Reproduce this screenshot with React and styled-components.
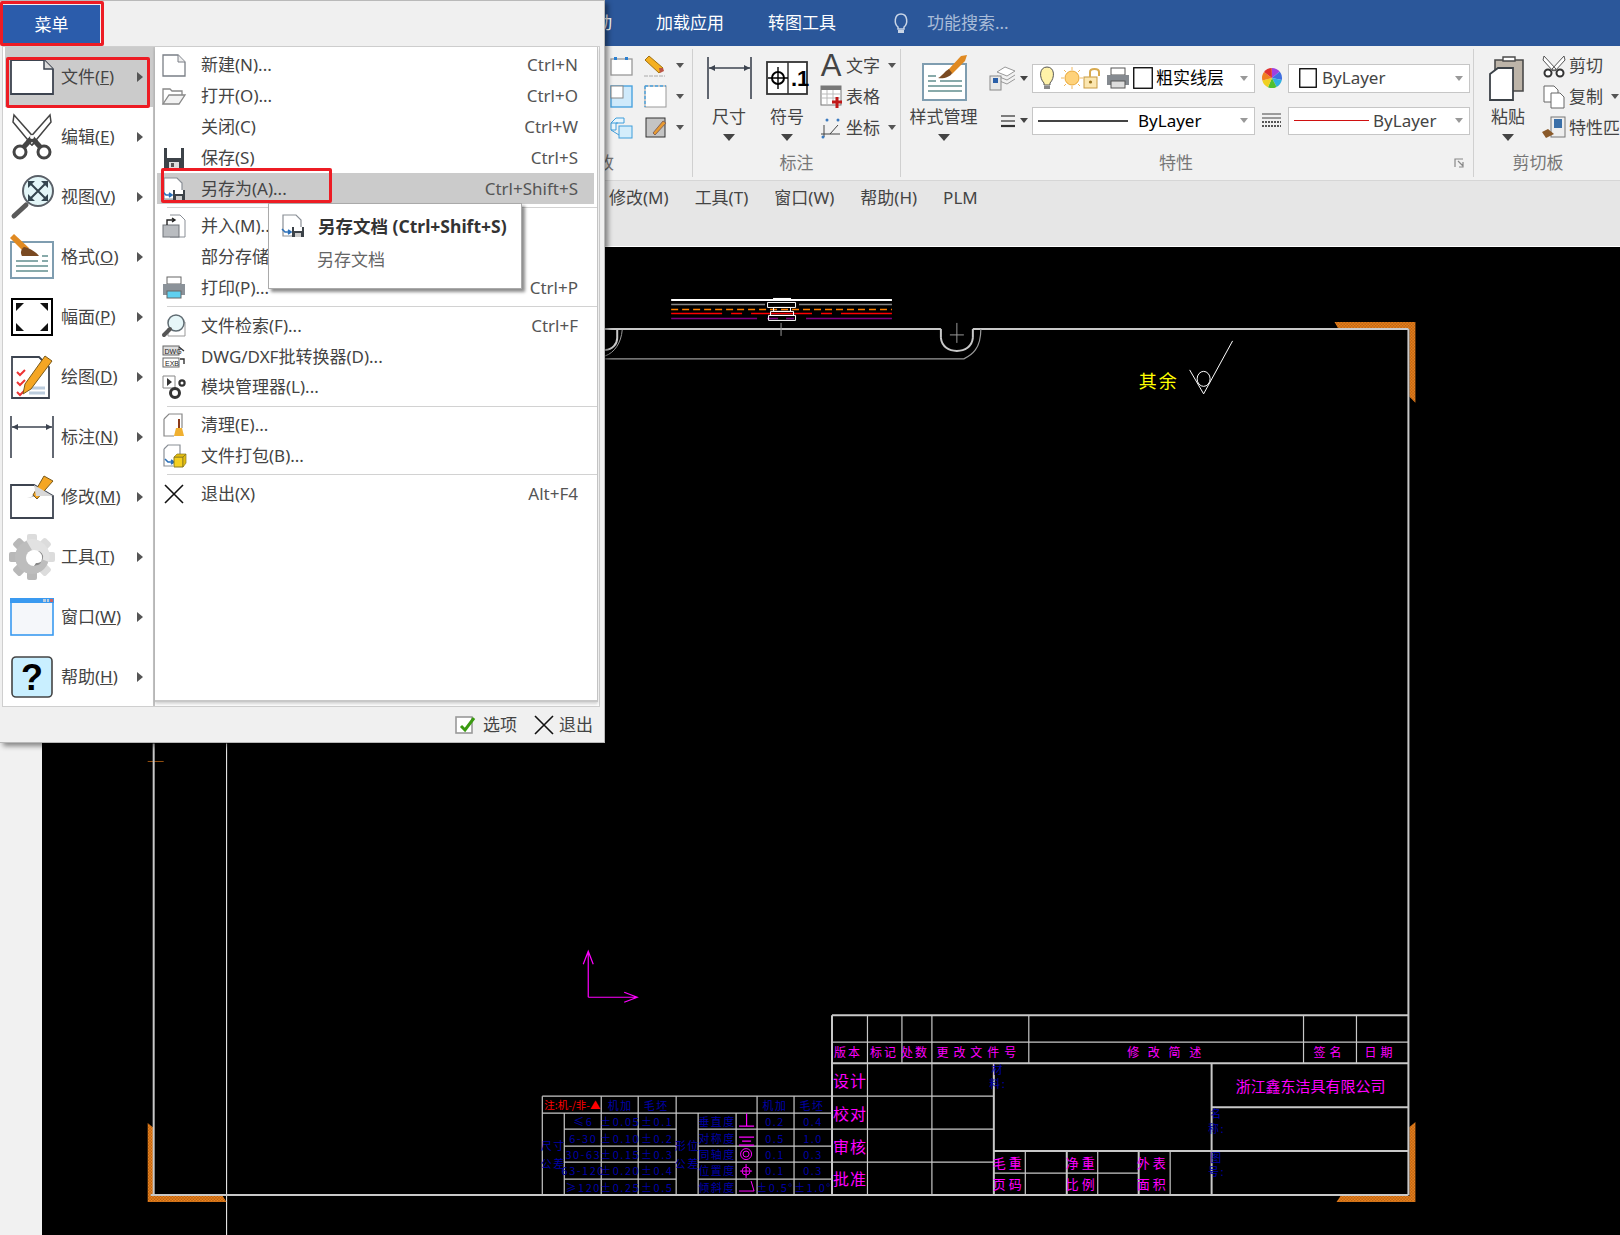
import React from 'react';
import styled, { createGlobalStyle } from 'styled-components';

const Global = createGlobalStyle`
  html, body { margin: 0; padding: 0; background: #000; }
  body { font-family: "Noto Sans", "Noto Sans CJK SC", sans-serif; }
  #root { width: 1620px; height: 1235px; }
`;

const Page = styled.div`
  position: relative; width: 1620px; height: 1235px; overflow: hidden;
  display: flex; flex-direction: column; color: #444; font-size: 17px; line-height: 22px;
`;
const TabBar = styled.div`
  height: 46px; flex: none; background: #2b579a; display: flex; align-items: center;
  padding-left: 595px; box-sizing: border-box; color: #fff; gap: 44px;
`;
const Tab = styled.span`white-space: nowrap;`;
const SearchBox = styled.div`
  display: flex; align-items: center; gap: 18px; margin-left: 13px; color: #a9bcd8;
`;
const Ribbon = styled.div`
  height: 135px; flex: none; box-sizing: border-box; background: #f1f1f1; border-bottom: 1px solid #d6d6d6;
  padding: 3px 0 3px 605px; display: flex; overflow: hidden;
`;
const Group = styled.div`
  width: ${p => p.$w}px; flex: none; box-sizing: border-box; display: flex; flex-direction: column;
  border-right: ${p => (p.$last ? 'none' : '1px solid #d0d0d0')};
`;
const GroupBody = styled.div`flex: 1; display: flex; min-height: 0;`;
const GroupLabel = styled.div`
  height: 27px; line-height: 26px; color: #777; text-align: center; white-space: nowrap;
  padding-right: ${p => p.$pr || 0}px; position: relative;
`;
const EdgeLabel = styled(GroupLabel)`text-align: left; margin-left: -8px;`;
const BigTool = styled.div`
  width: ${p => p.$w}px; flex: none; display: flex; flex-direction: column; align-items: center;
`;
const BigIcon = styled.div`height: 52px; margin-top: 3px; display: flex; align-items: center; justify-content: center;`;
const BigLabel = styled.div`margin-top: 2px; white-space: nowrap; text-align: center;`;
const BigCaret = styled.i`
  display: block; margin-top: 6px; width: 0; height: 0;
  border-left: 6px solid transparent; border-right: 6px solid transparent; border-top: 7px solid #444;
`;
const Caret = styled.i`
  display: block; flex: none; width: 0; height: 0; margin-left: ${p => p.$ml || 0}px;
  border-left: 4px solid transparent; border-right: 4px solid transparent; border-top: 5px solid ${p => p.$c || '#555'};
`;
const EditGrid = styled.div`
  display: grid; grid-template-columns: 34px 32px 10px; grid-auto-rows: 31px; padding: 1px 0 0 5px; align-items: center;
`;
const SmallCol = styled.div`margin-left: ${p => p.$ml || 0}px; display: flex; flex-direction: column; padding-top: 1px;`;
const SmallTool = styled.div`height: 31px; display: flex; align-items: center; white-space: nowrap;`;
const SmallSlot = styled.div`width: 24px; flex: none; display: flex; justify-content: center; margin-right: 3px;`;
const PropArea = styled.div`display: flex; flex-direction: column; gap: 14px; padding-top: 15px;`;
const PropRow = styled.div`display: flex; align-items: center; height: 28.5px;`;
const PropLead = styled.div`width: 46px; flex: none; display: flex; align-items: center; justify-content: flex-end; gap: 5px; padding-right: 4px; box-sizing: border-box;`;
const PropMid = styled.div`width: 33px; flex: none; display: flex; justify-content: center;`;
const Combo = styled.div`
  width: ${p => p.$w}px; height: 100%; box-sizing: border-box; background: #fff; border: 1px solid #c6c6c6;
  display: flex; align-items: center; padding: 0 6px 0 ${p => p.$pl || 5}px; white-space: nowrap; color: ${p => p.$c || '#444'};
  flex: none;
`;
const ComboEnd = styled.div`margin-left: auto;`;
const Launcher = styled.svg`position: absolute; right: 8px; top: 8px;`;
const MenuBarRow = styled.div`
  height: 65px; flex: none; box-sizing: border-box; background: #e6e6e6; display: flex; gap: 26px; padding: 6px 0 0 609px;
`;
const MenuWord = styled.span`white-space: nowrap;`;
const Canvas = styled.div`flex: 1; min-height: 0; display: flex; background: #000; `;
const Gutter = styled.div`width: 42px; flex: none; background: #f1f1f1;`;
const Sheet = styled.svg`display: block; flex: none; border-top: 1px solid #fff; box-sizing: border-box;`;

const MenuPanel = styled.div`
  position: absolute; left: 0; top: 0; width: 605px; height: 743px; box-sizing: border-box;
  background: #f0f0f0; border: 1px solid #b9b9b9; border-left: 0; box-shadow: 3px 3px 5px rgba(0,0,0,.45);
  display: flex; flex-direction: column;
`;
const MenuHead = styled.div`height: 45px; flex: none; display: flex; padding: 4px 0 0 3px; box-sizing: border-box;`;
const MenuButton = styled.div`
  width: 97px; height: 39px; background: #2b5cab; color: #fff; display: flex; align-items: center; justify-content: center;
`;
const MenuBody = styled.div`
  height: 661px; flex: none; margin: 0 4px 0 2px; background: #fff; border: 1px solid #cfcfcf; display: flex; box-sizing: border-box;
`;
const LeftList = styled.div`width: 148px; flex: none; border-right: 2px solid #c4c4c4; box-sizing: content-box; padding-left: 2px;`;
const LeftRow = styled.div`
  height: 60px; display: flex; align-items: center; background: ${p => (p.$on ? '#cbcbcb' : 'transparent')};
`;
const LeftIcon = styled.div`width: 44px; flex: none; margin-left: 5px; display: flex; justify-content: center;`;
const LeftLabel = styled.div`margin-left: 7px; white-space: nowrap; flex: 1;`;
const RightTri = styled.i`
  display: block; flex: none; margin-right: 10px; width: 0; height: 0;
  border-top: 5px solid transparent; border-bottom: 5px solid transparent; border-left: 6px solid #555;
`;
const RightPane = styled.div`
  width: 443px; height: 655px; flex: none; box-sizing: border-box; background: #fff; border-right: 1px solid #c4c4c4; border-bottom: 2px solid #c8c8c8;
  padding-top: 3px; box-shadow: 0 2px 3px rgba(0,0,0,.18); display: flex; flex-direction: column;
`;
const FileRow = styled.div`
  height: 30.8px; flex: none; display: flex; align-items: center; margin: 0 3px 0 2px; background: ${p => (p.$on ? '#cbcbcb' : 'transparent')};
`;
const FileIcon = styled.div`width: 24px; height: 24px; flex: none; margin-left: 5px; display: flex; align-items: center; justify-content: center;`;
const FileLabel = styled.div`margin-left: 15px; white-space: nowrap;`;
const Shortcut = styled.div`margin-left: auto; padding-right: 16px; white-space: nowrap; color: #555;`;
const Sep = styled.div`height: 1px; flex: none; margin: 3px 0 3px 12px; background: #d2d2d2;`;
const MenuFoot = styled.div`
  flex: 1; display: flex; align-items: center; justify-content: flex-end; gap: 16px; padding-right: 11px;
`;
const FootBtn = styled.div`display: flex; align-items: center; gap: 4px;`;
const Flyout = styled.div`
  position: absolute; left: 268px; top: 203px; width: 254px; height: 86px; box-sizing: border-box; background: #fff;
  border: 1px solid #aaa; box-shadow: 3px 3px 3px rgba(0,0,0,.45); padding: 10px 0 0 12px;
`;
const FlyTitle = styled.div`display: flex; align-items: center; gap: 13px; font-weight: 700; font-size: 17.5px; color: #333; white-space: nowrap;`;
const FlyText = styled.div`margin: 11px 0 0 36px; color: #666;`;
const RedMark = styled.div`
  position: absolute; left: ${p => p.$x}px; top: ${p => p.$y}px; width: ${p => p.$w}px; height: ${p => p.$h}px;
  box-sizing: border-box; border: 3px solid #ed1c24; border-radius: 2px; pointer-events: none;
`;
const Ic = styled.svg`display: block; flex: none; overflow: visible;`;

const D = '#3d4450';
const I = ({ w, h, children }) => <Ic width={w} height={h} viewBox={`0 0 ${w} ${h}`}>{children}</Ic>;

/* ---- large menu icons ---- */
const BigDoc = () => <I w={44} h={36}><path d="M1 1H34L43 10V35H1Z" fill="#fff" stroke={D} strokeWidth="1.8"/><path d="M34 1V10H43" fill="#ddd" stroke={D} strokeWidth="1.5"/></I>;
const BigScissors = () => <I w={42} h={46}>
  <path d="M3 1L26 27L21 31L2 8Z" fill="#fff" stroke="#444" strokeWidth="1.5"/>
  <path d="M39 1L16 27L21 31L40 8Z" fill="#fff" stroke="#444" strokeWidth="1.5"/>
  <path d="M21 24L10 36M21 24L32 36" stroke="#444" strokeWidth="5"/>
  <circle cx="9" cy="38" r="6" fill="#fff" stroke="#444" strokeWidth="3"/><circle cx="33" cy="38" r="6" fill="#fff" stroke="#444" strokeWidth="3"/>
  <circle cx="21" cy="23" r="2" fill="#fff"/>
</I>;
const BigZoom = () => <I w={44} h={44}>
  <path d="M16 30L4 41" stroke="#5a5a5a" strokeWidth="5" strokeLinecap="round"/>
  <circle cx="28" cy="16" r="15" fill="#e3f6f8" stroke="#5a6068" strokeWidth="2"/>
  <path d="M21 9L35 23M35 9L21 23" stroke="#33454f" strokeWidth="2"/>
  <path d="M18 6h7l-7 7zM38 6h-7l7 7zM18 26h7l-7-7zM38 26h-7l7-7z" fill="#33454f"/>
</I>;
const BigFormat = () => <I w={44} h={46}>
  <rect x="1" y="8" width="42" height="36" fill="#fff" stroke="#7f9db0" strokeWidth="2"/>
  <path d="M6 27h22M6 32h32M6 37h32M32 22h6M32 27h6" stroke="#8aa" strokeWidth="2"/>
  <path d="M0 4L4 0L19 14L14 18Z" fill="#e08a22"/><path d="M14 13C20 14 26 18 29 22H12C10 19 11 15 14 13Z" fill="#7a4a22"/>
</I>;
const BigFrame = () => <I w={42} h={38}>
  <rect x="1" y="1" width="40" height="36" fill="#fff" stroke="#000" strokeWidth="2"/>
  <path d="M5 5h8l-8 8zM37 5h-8l8 8zM5 33h8l-8-8zM37 33h-8l8-8z" fill="#111"/>
</I>;
const BigDraw = () => <I w={42} h={44}>
  <path d="M1 2H28L38 12V43H1Z" fill="#fff" stroke={D} strokeWidth="1.8"/>
  <path d="M6 17l3 3 5-5M6 27l3 3 5-5M6 37l3 3 5-5" fill="none" stroke="#e33" strokeWidth="2"/>
  <path d="M18 33h16M18 38h16" stroke="#bcd" strokeWidth="3"/>
  <path d="M34 1L41 6L20 34L12 39L14 29Z" fill="#f5a623" stroke="#7a5a1a"/>
</I>;
const BigDim = () => <I w={44} h={42}>
  <path d="M1 0V42M43 0V42" stroke={D} strokeWidth="1.6"/><path d="M2 11H42" stroke={D} strokeWidth="1.4"/>
  <path d="M2 11l6-3v6zM42 11l-6-3v6z" fill={D}/>
</I>;
const BigModify = () => <I w={44} h={44}>
  <path d="M1 10H24L43 21V43H1Z" fill="#fff" stroke={D} strokeWidth="1.8"/>
  <path d="M34 1L43 6L27 24L23 20Z" fill="#f5a623" stroke="#7a5a1a"/><path d="M23 20l-1 2 -5 1 8-2" fill="#555"/>
  <path d="M24 10L43 21H26Z" fill="#d8d8d8"/>
</I>;
const BigGear = () => <I w={42} h={46}>
  <g transform="translate(21 23)">
    {[0,45,90,135,180,225,270,315].map(a => <rect key={a} x="-5" y="-23" width="10" height="10" rx="2" transform={`rotate(${a})`} fill={a<150?'#dcdcdc':'#b8b8b8'}/>)}
    <circle r="17" fill="#bdbdbd"/><path d="M-6 -17A18 18 0 0 1 17 5L4 0Z" fill="#e2e2e2"/>
    <circle cx="2" cy="1" r="8" fill="#fff"/><path d="M6 -6A8 8 0 0 1 2 9L4 6A6 6 0 0 0 6 -6Z" fill="#888"/>
  </g>
</I>;
const BigWindow = () => <I w={44} h={38}>
  <rect x="1" y="1" width="42" height="36" fill="#f5f7fa" stroke="#3a9af0" strokeWidth="1.6"/><rect x="0" y="0" width="44" height="5" fill="#3a9af0"/>
  <rect x="33" y="1" width="3" height="3" fill="#bcd"/><rect x="37" y="1" width="2" height="3" fill="#bcd"/><rect x="40" y="1" width="3" height="3" fill="#c66"/>
</I>;
const QMark = styled.text`font-family: "Liberation Sans", sans-serif; font-weight: 700; font-size: 36px;`;
const BigHelp = () => <I w={42} h={42}><rect x="1" y="1" width="40" height="40" rx="4" fill="#c9efff" stroke="#444" strokeWidth="1.6"/><QMark x="21" y="34" textAnchor="middle" fill="#000">?</QMark></I>;

/* ---- small icons ---- */
const S = 24;
const SmDoc = () => <I w={S} h={S}><path d="M1 2H16L23 9V23H1Z" fill="#fff" stroke="#7a7f86" strokeWidth="1.3"/><path d="M16 2V9H23" fill="#eee" stroke="#7a7f86"/></I>;
const SmFolder = () => <I w={S} h={S}><path d="M1 20V5H8L10 7H20V11" fill="#fff" stroke="#888" strokeWidth="1.3"/><path d="M1 20L7 11H23L17 20Z" fill="#f2f2f2" stroke="#888" strokeWidth="1.3"/></I>;
const SmSave = () => <I w={S} h={S}><path d="M2 2H22V22H2Z" fill="#3c4248"/><rect x="5" y="2" width="14" height="10" fill="#fff"/><rect x="7" y="16" width="10" height="6" fill="#ddd"/><rect x="9" y="17" width="3" height="4" fill="#555"/></I>;
const SmSaveAs = () => <I w={S} h={S}><path d="M2 1H15L20 6V22H2Z" fill="#fff" stroke="#8a8f96" strokeWidth="1.2"/><path d="M1 15l3 3h5M7 16l3 2-3 2" fill="none" stroke="#2a6fb8" strokeWidth="1.6"/><rect x="11" y="13" width="12" height="10" fill="#3c4248"/><rect x="13" y="13" width="8" height="4" fill="#fff"/><rect x="14" y="19" width="6" height="4" fill="#ccc"/></I>;
const SmMerge = () => <I w={S} h={S}><path d="M8 1H18L23 6V23H8" fill="#fff" stroke="#8a8f96"/><rect x="1" y="11" width="16" height="12" fill="#b9bcc0" stroke="#70757a"/><path d="M5 11V6H12M10 4l3 2-3 2" fill="none" stroke="#222" strokeWidth="1.4"/></I>;
const SmPrint = () => <I w={S} h={S}><rect x="5" y="1" width="14" height="7" fill="#fff" stroke="#666"/><path d="M1 8H23V19H1Z" fill="#8b9299"/><rect x="5" y="15" width="14" height="7" fill="#5fd0f0" stroke="#666"/></I>;
const SmSearch = () => <I w={S} h={S}><path d="M6 14V22H23V8H20" fill="#fff" stroke="#999"/><circle cx="14" cy="9" r="8" fill="#e6f6f8" stroke="#5f6b72" strokeWidth="1.5"/><path d="M8 15L2 21" stroke="#555" strokeWidth="4" strokeLinecap="round"/></I>;
const TinyT = styled.text`font-family: "Liberation Sans", sans-serif; font-size: 7px;`;
const SmConvert = () => <I w={S} h={S}><rect x="1" y="1" width="16" height="9" fill="#ddd" stroke="#666"/><TinyT x="2.5" y="8.5" fill="#222">DWG</TinyT><rect x="1" y="13" width="16" height="9" fill="#fff" stroke="#666"/><TinyT x="3" y="20.5" fill="#222">EXB</TinyT><path d="M17 2l5 4M22 19v-5h-4" fill="none" stroke="#333" strokeWidth="1.4"/></I>;
const SmModule = () => <I w={S} h={S}><path d="M1 1H13V13H1Z" fill="#fff" stroke="#888"/><path d="M5 3l5 4-5 4z" fill="#333"/><circle cx="13" cy="18" r="4.5" fill="none" stroke="#333" strokeWidth="3"/><circle cx="20" cy="8" r="2.6" fill="none" stroke="#333" strokeWidth="2.2"/></I>;
const SmClean = () => <I w={S} h={S}><path d="M2 6L7 1H20V15M12 23H2V6" fill="#fff" stroke="#888" strokeWidth="1.2"/><path d="M17 6V15" stroke="#8a3a1a" strokeWidth="2"/><path d="M14 15H20L22 23H12Z" fill="#f0b030"/></I>;
const SmPack = () => <I w={S} h={S}><path d="M2 5L6 1H18V11M11 22H2V5" fill="#fff" stroke="#8a8f96" strokeWidth="1.2"/><path d="M3 15l3 3h5M9 16l3 2-3 2" fill="none" stroke="#2a6fb8" strokeWidth="1.6"/><path d="M12 13h9v10h-9z" fill="#f5d020" stroke="#8a7a20"/><path d="M12 13l3-3h9l-3 3zM21 13l3-3v9l-3 4z" fill="#e2bc10" stroke="#8a7a20" strokeWidth=".7"/></I>;
const SmX = ({ c = '#111' }) => <I w={S - 2} h={S - 2}><path d="M2 2L20 20M20 2L2 20" stroke={c} strokeWidth="1.6"/></I>;
const SmCheck = () => <I w={S} h={S}><rect x="1" y="4" width="16" height="16" fill="#fff" stroke="#999" strokeWidth="1.6"/><path d="M6 13l4 4 9-12" fill="none" stroke="#3a9a10" strokeWidth="3"/></I>;
const Bulb = ({ c = '#c9d5e6', s = 1 }) => <I w={16 * s} h={20 * s}><path d={`M${5*s} ${14*s}C${1*s} ${11*s} ${1*s} ${1*s} ${8*s} ${1*s}C${15*s} ${1*s} ${15*s} ${11*s} ${11*s} ${14*s}V${16*s}H${5*s}Z`} fill="none" stroke={c} strokeWidth="1.5"/><rect x={5*s} y={17*s} width={6*s} height={3*s} fill={c}/></I>;

/* ---- ribbon icons ---- */
const RDots = () => <I w={23} h={20}><rect x="1" y="3" width="21" height="16" fill="#fff" stroke="#999" strokeWidth="1.3"/><rect x="4" y="1" width="3" height="3" fill="#2a7fd0"/><rect x="15" y="1" width="3" height="3" fill="#2a7fd0"/></I>;
const RMarker = () => <I w={22} h={22}><path d="M1 5L5 1L19 13L15 18Z" fill="#f5b020" stroke="#a07010"/><path d="M15 13L19 13L20 16L16 18Z" fill="#b54"/><path d="M0 21H21" stroke="#aaa" strokeDasharray="4 1"/></I>;
const RBlue = () => <I w={23} h={23}><rect x="1" y="1" width="21" height="21" fill="#cfeafb" stroke="#4aa3df" strokeWidth="1.4"/><rect x="1" y="1" width="12" height="12" fill="#fff" stroke="#888"/></I>;
const RDash = () => <I w={23} h={23}><rect x="1" y="1" width="21" height="21" fill="#fff" stroke="#999"/><path d="M1 1H22" stroke="#4aa3df" strokeDasharray="3 2" strokeWidth="1.4"/><path d="M1 1V22" stroke="#4aa3df" strokeDasharray="3 2" strokeWidth="1.4"/></I>;
const RCubes = () => <I w={23} h={22}><path d="M1 6L6 1H14V6L6 6V13H1ZM1 6H8" fill="#e9f6fd" stroke="#3f9edb"/><rect x="9" y="9" width="13" height="12" fill="#d4edfb" stroke="#3f9edb"/><path d="M1 13L9 18" stroke="#3f9edb"/></I>;
const RHatch = () => <I w={23} h={23}><rect x="2" y="2" width="19" height="19" fill="#c4c4c4" stroke="#333"/><path d="M9 17L19 5L22 7L11 19Z" fill="#e89a30" stroke="#865"/></I>;
const RDim = () => <I w={45} h={42}><path d="M1 0V42M44 0V42" stroke={D} strokeWidth="1.6"/><path d="M2 11H43" stroke={D} strokeWidth="1.3"/><path d="M2 11l6-3v6zM43 11l-6-3v6z" fill={D}/></I>;
const SymT = styled.text`font-family: "Liberation Sans", sans-serif; font-weight: 700; font-size: 22px;`;
const RSym = () => <I w={42} h={34}><rect x="1" y="1" width="40" height="32" fill="#fff" stroke="#333" strokeWidth="1.8"/><path d="M22 1V33" stroke="#333" strokeWidth="1.5"/><circle cx="12" cy="17" r="6" fill="none" stroke="#000" strokeWidth="2"/><path d="M12 6V28M2 17H22" stroke="#000" strokeWidth="1.4"/><SymT x="25" y="25" fill="#000">.1</SymT></I>;
const AGlyph = styled.span`font-family: "Liberation Sans", sans-serif; font-size: 31px; line-height: 24px; color: #444;`;
const RTable = () => <I w={23} h={23}><rect x="1" y="1" width="20" height="19" fill="#fff" stroke="#777"/><rect x="1" y="1" width="20" height="4" fill="#777"/><path d="M1 9H21M1 13H21M7 5V20M13 5V20" stroke="#bbb"/><path d="M17 12V23M12 17H22" stroke="#c01818" strokeWidth="3"/></I>;
const RCoord = () => <I w={23} h={22}><path d="M4 20V8M1 17H20M10 17L18 8" fill="none" stroke="#444"/><circle cx="7" cy="3" r="1.5" fill="#3a7ac0"/><circle cx="18" cy="3" r="1.5" fill="#3a7ac0"/><circle cx="3" cy="20" r="1.5" fill="#3a7ac0"/></I>;
const RStyle = () => <I w={46} h={46}><rect x="2" y="9" width="43" height="36" fill="#fff" stroke="#7f9db0" strokeWidth="2"/><path d="M7 21h8M7 26h8M7 31h34M7 36h34M19 26h22" stroke="#8aa" strokeWidth="2"/><path d="M46 0L44 6L31 19L27 15L40 1Z" fill="#e08a22"/><path d="M28 14C24 16 20 22 17 23C22 24 30 22 31 18Z" fill="#7a4a22"/></I>;
const RLayers = () => <I w={25} h={24}><path d="M7 6L15 1L25 5L17 10Z" fill="#fff" stroke="#999"/><path d="M7 10L17 14L25 9M7 14L17 18L25 13" fill="none" stroke="#999"/><rect x="0" y="10" width="11" height="14" fill="#e8e8e8" stroke="#888"/><rect x="3" y="12" width="5" height="5" fill="#2a5fa8"/></I>;
const RBulb = () => <I w={16} h={24}><path d="M5 17C0 12 0 1 8 1C16 1 16 12 11 17V19H5Z" fill="#fff2a8" stroke="#555"/><rect x="5" y="20" width="6" height="3" fill="#888"/></I>;
const RSun = () => <I w={22} h={22}><circle cx="11" cy="11" r="7" fill="#ffd27a" stroke="#e8a838"/><path d="M11 0V3M11 19V22M0 11H3M19 11H22M3 3L5 5M19 3L17 5M3 19L5 17M19 19L17 17" stroke="#f0b860"/></I>;
const RLock = () => <I w={18} h={22}><rect x="1" y="10" width="13" height="11" fill="#fbe6b0" stroke="#c89a40"/><path d="M7 10V5C7 1 16 1 16 5V9" fill="none" stroke="#d8aa50" strokeWidth="2"/><circle cx="7.5" cy="15" r="1.6" fill="#96701a"/></I>;
const RPrint = () => <I w={24} h={22}><rect x="5" y="1" width="14" height="7" fill="#fff" stroke="#555"/><rect x="1" y="8" width="22" height="10" fill="#858a90"/><rect x="5" y="14" width="14" height="7" fill="#ddd" stroke="#555"/></I>;
const Swatch = ({ s = 20 }) => <I w={s} h={s + 2}><rect x=".75" y=".75" width={s - 1.5} height={s + .5} fill="#fff" stroke="#000" strokeWidth="1.3"/></I>;
const sectors = ['#a040e0','#3f6fe0','#30b0e0','#50c030','#f0d020','#f08020','#e03030'];
const RWheel = () => <I w={20} h={20}>{sectors.map((c, i) => {
  const a0 = (i / 7) * 2 * Math.PI - 1.6, a1 = ((i + 1) / 7) * 2 * Math.PI - 1.6;
  return <path key={c} d={`M10 10L${10 + 10 * Math.cos(a0)} ${10 + 10 * Math.sin(a0)}A10 10 0 0 1 ${10 + 10 * Math.cos(a1)} ${10 + 10 * Math.sin(a1)}Z`} fill={c}/>;
})}</I>;
const REquals = () => <I w={14} h={12}><path d="M0 1H14M0 6H14" stroke="#555" strokeWidth="1.4"/><path d="M0 11H14" stroke="#333" strokeWidth="2.2"/></I>;
const RLinetype = () => <I w={19} h={16}><path d="M0 1H19M0 5H19" stroke="#444"/><path d="M0 9H19M0 13H19" stroke="#222" strokeWidth="1.6" strokeDasharray="2 1"/></I>;
const LineSample = styled.div`width: ${p => p.$w}px; height: ${p => p.$t}px; background: ${p => p.$c}; flex: none; margin-right: ${p => p.$mr}px;`;
const RPaste = () => <I w={38} h={46}><path d="M6 5H34V36H6Z" fill="#bdb4a8" stroke="#4a4a4a" strokeWidth="1.6"/><path d="M14 6V2H26V6Z" fill="#fff" stroke="#4a4a4a" strokeWidth="1.4"/><path d="M1 19L9 13H24V45H1Z" fill="#fff" stroke="#3c4248" strokeWidth="1.8"/></I>;
const RCut = () => <I w={24} h={22}><path d="M2 1L14 14L11 16L1 5ZM22 1L10 14L13 16L23 5Z" fill="#fff" stroke="#555"/><circle cx="6" cy="18" r="3.5" fill="#fff" stroke="#333" strokeWidth="2"/><circle cx="18" cy="18" r="3.5" fill="#fff" stroke="#333" strokeWidth="2"/></I>;
const RCopy = () => <I w={22} h={24}><path d="M1 1H11L15 5V17H1Z" fill="#fff" stroke="#666"/><path d="M8 8H17L21 12V23H8Z" fill="#fff" stroke="#666"/></I>;
const RMatch = () => <I w={24} h={23}><rect x="9" y="1" width="14" height="20" fill="#eee" stroke="#777"/><rect x="12" y="3" width="8" height="9" fill="#3a6fa8"/><path d="M0 16L6 13L12 18L4 22Z" fill="#8a5a2a"/></I>;

/* ---- data ---- */
const leftItems = [
  ['文件', 'F', BigDoc], ['编辑', 'E', BigScissors], ['视图', 'V', BigZoom], ['格式', 'O', BigFormat],
  ['幅面', 'P', BigFrame], ['绘图', 'D', BigDraw], ['标注', 'N', BigDim], ['修改', 'M', BigModify],
  ['工具', 'T', BigGear], ['窗口', 'W', BigWindow], ['帮助', 'H', BigHelp],
];
const fileGroups = [
  [['新建(N)...', 'Ctrl+N', SmDoc], ['打开(O)...', 'Ctrl+O', SmFolder], ['关闭(C)', 'Ctrl+W'], ['保存(S)', 'Ctrl+S', SmSave], ['另存为(A)...', 'Ctrl+Shift+S', SmSaveAs, true]],
  [['并入(M)...', '', SmMerge], ['部分存储', ''], ['打印(P)...', 'Ctrl+P', SmPrint]],
  [['文件检索(F)...', 'Ctrl+F', SmSearch], ['DWG/DXF批转换器(D)...', '', SmConvert], ['模块管理器(L)...', '', SmModule]],
  [['清理(E)...', '', SmClean], ['文件打包(B)...', '', SmPack]],
  [['退出(X)', 'Alt+F4', SmX]],
];

/* ---- the CAD sheet (coordinates are page pixels) ---- */
const G = '#c8c8c8';
const MAG = '#ff00ff';
const BLU = '#0000a8';
const thick = [
  [605,328,941,328],[973,328,1409,328],[941,328,941,337],[973,328,973,337],
  [1409,328,1409,1195],[150,1195,1409,1195],[153,743,153,1195],
  [832,1015,1409,1015],[832,1015,832,1195],[832,1063,1409,1063],[994,1063,994,1195],[1212,1063,1212,1195],
  [1212,1107,1409,1107],[994,1151,1409,1151],[1067,1151,1067,1195],[1139,1151,1139,1195],
];
const thin = [
  [832,1042,1409,1042],[867.5,1015,867.5,1195],[902,1015,902,1063],[932,1015,932,1195],[1029,1015,1029,1063],[1304,1015,1304,1063],[1357,1015,1357,1063],
  [832,1096,994,1096],[832,1129,994,1129],[832,1162,994,1162],[994,1173,1139,1173],[1025.5,1151,1025.5,1195],[1098,1151,1098,1195],[1170.5,1151,1170.5,1195],
  [542,1096,832,1096],[542,1113,832,1113],[542,1096,542,1195],[564,1113,564,1195],[601,1096,601,1195],[638,1096,638,1195],[676,1096,676,1195],
  [698,1113,698,1195],[736,1113,736,1195],[757,1096,757,1195],[794,1096,794,1195],
  ...[1129,1146,1162,1179].flatMap(y => [[564,y,676,y],[698,y,832,y]]),
];
const magText = [
  [848,1057,'版本',12,2],[884,1057,'标记',12,2],[915,1057,'处数',12,2],[979,1057,'更改文件号',12,5],[1166,1057,'修  改  简  述',12,3],[1330,1057,'签名',12,4],[1381,1057,'日期',12,4],
  [850,1087,'设计',16,1],[850,1120,'校对',16,1],[850,1153,'审核',16,1],[850,1185,'批准',16,1],
  [1009,1168,'毛重',13,3],[1009,1189,'页码',13,3],[1082,1168,'净重',13,3],[1082,1189,'比例',13,3],[1153,1168,'外表',13,3],[1153,1189,'面积',13,3],
  [1311,1092,'浙江鑫东洁具有限公司',15,0],
];
const bluText = [
  [620,1110,'机加'],[656,1110,'毛坯'],[775,1110,'机加'],[812,1110,'毛坯'],
  [553,1150,'尺寸'],[553,1168,'公差'],[687,1150,'形位'],[687,1168,'公差'],
  [717,1126,'垂直度'],[717,1143,'对称度'],[717,1159,'同轴度'],[717,1175,'位置度'],[717,1192,'倾斜度'],
  ...[['≤6','±0.05','±0.1'],['6-30','±0.10','±0.2'],['30-63','±0.15','±0.3'],['63-120','±0.20','±0.4'],['≥120','±0.25','±0.5']].flatMap((r, i) => {
    const y = [1126,1143,1159,1175,1192][i];
    return [[583,y,r[0]],[620,y,r[1]],[657,y,r[2]]];
  }),
  ...[['0.2','0.4'],['0.5','1.0'],['0.1','0.3'],['0.1','0.3'],['±0.5°','±1.0°']].flatMap((r, i) => {
    const y = [1126,1143,1159,1175,1192][i];
    return [[775,y,r[0]],[813,y,r[1]]];
  }),
  [998,1074,'材'],[998,1088,'料:'],[1217,1118,'名'],[1217,1133,'称:'],[1217,1162,'图'],[1217,1176,'号:'],
];
const SheetText = styled.text`font-family: "Noto Sans CJK SC", "Noto Sans", sans-serif;`;

const CadSheet = () => (
  <Sheet width="1578" height="989" viewBox="42 246 1578 989">
    <defs>
      <pattern id="hatch" width="3" height="3" patternUnits="userSpaceOnUse">
        <rect width="3" height="3" fill="#a85a10"/><rect width="1.5" height="1.5" fill="#ff8c20"/><rect x="1.5" y="1.5" width="1.5" height="1.5" fill="#ff8c20"/>
      </pattern>
    </defs>
    <path d="M226 743V1235" stroke="#fff" strokeWidth="1"/>
    {/* hatch corners */}
    <path d="M1335 321H1416V402L1410 396V328H1339Z" fill="url(#hatch)"/>
    <path d="M1416 1122V1202H1337L1341 1196H1410V1127Z" fill="url(#hatch)"/>
    <path d="M147 1123V1202H226L222 1196H153V1128Z" fill="url(#hatch)"/>
    <path d="M147 761H163" stroke="#96500f"/>
    {thick.map((l, i) => <line key={i} x1={l[0]} y1={l[1]} x2={l[2]} y2={l[3]} stroke={G} strokeWidth="2"/>)}
    {thin.map((l, i) => <line key={i} x1={l[0]} y1={l[1]} x2={l[2]} y2={l[3]} stroke={G} strokeWidth="1.2"/>)}
    {/* top edge */}
    <path d="M941 337C942 346 949 350 957 350C965 350 972 346 973 337" fill="none" stroke={G} strokeWidth="2"/>
    <path d="M605 358H964C972 354 981 348 981 328" fill="none" stroke="#999" strokeWidth="1.2"/>
    <path d="M605 349C612 349 617 343 617 337V328H605" fill="none" stroke={G} strokeWidth="2"/>
    <path d="M622 329C621 342 614 352 605 355" fill="none" stroke="#999"/>
    <path d="M957 322V342M950 334H964M781 322V335" stroke="#999"/>
    {/* stacked symbol */}
    <path d="M671 299H892" stroke="#fff" strokeWidth="2"/>
    <path d="M671 303.5H765M799 303.5H892" stroke="#888" strokeWidth="1.4"/>
    <path d="M671 308.5H892" stroke="#ff8000" strokeWidth="1.4" strokeDasharray="7 4"/>
    <path d="M671 312.5H722M731 312.5H742M751 312.5H812M821 312.5H832M841 312.5H892" stroke="#f00" strokeWidth="1.6"/>
    <path d="M671 317.5H757M767 317.5H778M786 317.5H794M806 317.5H892" stroke="#800080" strokeWidth="1.4"/>
    <rect x="773" y="297" width="18" height="3" fill="#fff"/>
    <path d="M767.5 301.5H795.5V306.5H767.5ZM773.5 306.5H790.5V310.5H773.5ZM770.5 310.5H793.5V314.5H770.5ZM768.5 314.5H795.5V319.5H768.5Z" fill="none" stroke="#fff"/>
    {/* surface finish */}
    <SheetText x="1139" y="387" fontSize="18" letterSpacing="2" fill="#ffff00">其余</SheetText>
    <path d="M1190 369L1204 393L1233 340" fill="none" stroke="#fff"/>
    <ellipse cx="1204" cy="378" rx="6.5" ry="7.5" fill="none" stroke="#fff"/>
    {/* UCS */}
    <path d="M588 997V951M588 997H637M583 964L588 951L593 964M624 992L637 997L624 1002" fill="none" stroke={MAG} strokeWidth="1.2"/>
    {/* tolerance symbols */}
    <path d="M739 1126H754M746.5 1126V1113.5M739 1137H754M742 1141H751M739 1145H754" fill="none" stroke={MAG} strokeWidth="1.2"/>
    <circle cx="746" cy="1154" r="5.5" fill="none" stroke={MAG}/><circle cx="746" cy="1154" r="3" fill="none" stroke={MAG}/>
    <circle cx="746" cy="1171" r="4" fill="none" stroke={MAG}/><path d="M746 1164V1178M740 1171H752M739 1191H754L751 1181" fill="none" stroke={MAG}/>
    {magText.map(([x, y, t, s, ls]) => <SheetText key={t} x={x} y={y} fontSize={s} letterSpacing={ls} textAnchor="middle" fill={MAG}>{t}</SheetText>)}
    {bluText.map(([x, y, t], i) => <SheetText key={i} x={x} y={y} fontSize="11" letterSpacing="1.5" textAnchor="middle" fill={BLU}>{t}</SheetText>)}
    <SheetText x="544" y="1109" fontSize="10.5" fill="#ff0000">注:机-/非-▲</SheetText>
  </Sheet>
);

const LeftMenu = () => (
  <LeftList>
    {leftItems.map(([name, key, Icon], i) => (
      <LeftRow key={name} $on={i === 0}>
        <LeftIcon><Icon/></LeftIcon>
        <LeftLabel>{name}(<u>{key}</u>)</LeftLabel>
        <RightTri/>
      </LeftRow>
    ))}
  </LeftList>
);

const FileMenu = () => (
  <RightPane>
    {fileGroups.map((g, gi) => (
      <React.Fragment key={gi}>
        {gi > 0 && <Sep/>}
        {g.map(([name, sc, Icon, on]) => (
          <FileRow key={name} $on={on}>
            <FileIcon>{Icon && <Icon/>}</FileIcon>
            <FileLabel>{name}</FileLabel>
            {sc && <Shortcut>{sc}</Shortcut>}
          </FileRow>
        ))}
      </React.Fragment>
    ))}
  </RightPane>
);

const RibbonBar = () => (
  <Ribbon>
    <Group $w={88}>
      <GroupBody>
        <EditGrid>
          <RDots/><RMarker/><Caret/>
          <RBlue/><RDash/><Caret/>
          <RCubes/><RHatch/><Caret/>
        </EditGrid>
      </GroupBody>
      <EdgeLabel>改</EdgeLabel>
    </Group>
    <Group $w={208}>
      <GroupBody>
        <BigTool $w={72}><BigIcon><RDim/></BigIcon><BigLabel>尺寸</BigLabel><BigCaret/></BigTool>
        <BigTool $w={44}><BigIcon><RSym/></BigIcon><BigLabel>符号</BigLabel><BigCaret/></BigTool>
        <SmallCol $ml={10}>
          <SmallTool><SmallSlot><AGlyph>A</AGlyph></SmallSlot>文字<Caret $ml={8}/></SmallTool>
          <SmallTool><SmallSlot><RTable/></SmallSlot>表格</SmallTool>
          <SmallTool><SmallSlot><RCoord/></SmallSlot>坐标<Caret $ml={8}/></SmallTool>
        </SmallCol>
      </GroupBody>
      <GroupLabel>标注</GroupLabel>
    </Group>
    <Group $w={573}>
      <GroupBody>
        <BigTool $w={85}><BigIcon><RStyle/></BigIcon><BigLabel>样式管理</BigLabel><BigCaret/></BigTool>
        <PropArea>
          <PropRow>
            <PropLead><RLayers/><Caret $c="#444"/></PropLead>
            <Combo $w={223} $pl={6} $c="#000">
              <RBulb/><LineSample $w={6} $t={0} $c="transparent" $mr={0}/><RSun/><RLock/><LineSample $w={5} $t={0} $c="transparent" $mr={0}/><RPrint/><LineSample $w={3} $t={0} $c="transparent" $mr={0}/><Swatch/><LineSample $w={3} $t={0} $c="transparent" $mr={0}/>粗实线层
              <ComboEnd><Caret $c="#999"/></ComboEnd>
            </Combo>
            <PropMid><RWheel/></PropMid>
            <Combo $w={182} $pl={10}>
              <Swatch s={18}/><LineSample $w={5} $t={0} $c="transparent" $mr={0}/>ByLayer
              <ComboEnd><Caret $c="#999"/></ComboEnd>
            </Combo>
          </PropRow>
          <PropRow>
            <PropLead><REquals/><Caret $c="#444"/></PropLead>
            <Combo $w={223} $c="#000">
              <LineSample $w={90} $t={2} $c="#444" $mr={10}/>ByLayer
              <ComboEnd><Caret $c="#999"/></ComboEnd>
            </Combo>
            <PropMid><RLinetype/></PropMid>
            <Combo $w={182}>
              <LineSample $w={75} $t={1} $c="#d01010" $mr={4}/>ByLayer
              <ComboEnd><Caret $c="#999"/></ComboEnd>
            </Combo>
          </PropRow>
        </PropArea>
      </GroupBody>
      <GroupLabel $pr={22}>
        特性
        <Launcher width="11" height="10" viewBox="0 0 11 10"><path d="M1 9V1H9M4 3L9 8M9 4V9H5" fill="none" stroke="#888" strokeWidth="1.2"/></Launcher>
      </GroupLabel>
    </Group>
    <Group $w={150} $last>
      <GroupBody>
        <BigTool $w={68}><BigIcon><RPaste/></BigIcon><BigLabel>粘贴</BigLabel><BigCaret/></BigTool>
        <SmallCol>
          <SmallTool><SmallSlot><RCut/></SmallSlot>剪切</SmallTool>
          <SmallTool><SmallSlot><RCopy/></SmallSlot>复制<Caret $ml={8}/></SmallTool>
          <SmallTool><SmallSlot><RMatch/></SmallSlot>特性匹配</SmallTool>
        </SmallCol>
      </GroupBody>
      <GroupLabel $pr={22}>剪切板</GroupLabel>
    </Group>
  </Ribbon>
);

export default function App() {
  return (
    <Page>
      <Global/>
      <TabBar>
        <Tab>动</Tab><Tab>加载应用</Tab><Tab>转图工具</Tab>
        <SearchBox><Bulb/>功能搜索...</SearchBox>
      </TabBar>
      <RibbonBar/>
      <MenuBarRow>
        {['修改(M)', '工具(T)', '窗口(W)', '帮助(H)', 'PLM'].map(m => <MenuWord key={m}>{m}</MenuWord>)}
      </MenuBarRow>
      <Canvas><Gutter/><CadSheet/></Canvas>

      <MenuPanel>
        <MenuHead><MenuButton>菜单</MenuButton></MenuHead>
        <MenuBody><LeftMenu/><FileMenu/></MenuBody>
        <MenuFoot>
          <FootBtn><SmCheck/>选项</FootBtn>
          <FootBtn><SmX/>退出</FootBtn>
        </MenuFoot>
      </MenuPanel>
      <Flyout>
        <FlyTitle><SmSaveAs/>另存文档 (Ctrl+Shift+S)</FlyTitle>
        <FlyText>另存文档</FlyText>
      </Flyout>
      <RedMark $x={0} $y={1} $w={104} $h={45}/>
      <RedMark $x={6} $y={57} $w={144} $h={51}/>
      <RedMark $x={161} $y={168} $w={171} $h={35}/>
    </Page>
  );
}
